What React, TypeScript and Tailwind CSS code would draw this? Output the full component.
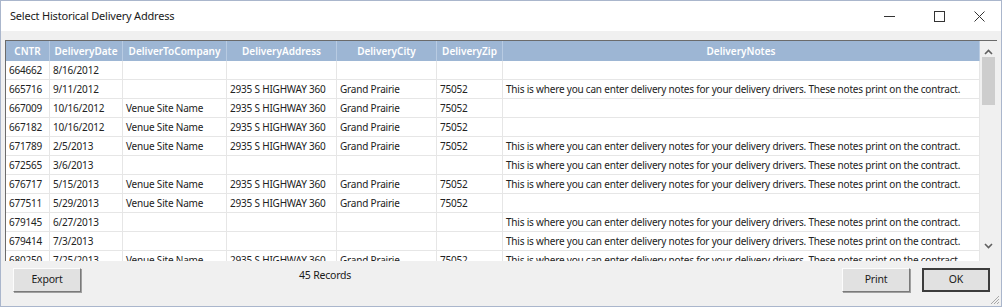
type Row = {
    cntr: string;
    date: string;
    company: string;
    address: string;
    city: string;
    zip: string;
    notes: string;
};

const NOTE = 'This is where you can enter delivery notes for your delivery drivers. These notes print on the contract.';

const rows: Row[] = [
    { cntr: '664662', date: '8/16/2012', company: '', address: '', city: '', zip: '', notes: '' },
    { cntr: '665716', date: '9/11/2012', company: '', address: '2935 S HIGHWAY 360', city: 'Grand Prairie', zip: '75052', notes: NOTE },
    { cntr: '667009', date: '10/16/2012', company: 'Venue Site Name', address: '2935 S HIGHWAY 360', city: 'Grand Prairie', zip: '75052', notes: '' },
    { cntr: '667182', date: '10/16/2012', company: 'Venue Site Name', address: '2935 S HIGHWAY 360', city: 'Grand Prairie', zip: '75052', notes: '' },
    { cntr: '671789', date: '2/5/2013', company: 'Venue Site Name', address: '2935 S HIGHWAY 360', city: 'Grand Prairie', zip: '75052', notes: NOTE },
    { cntr: '672565', date: '3/6/2013', company: '', address: '', city: '', zip: '', notes: NOTE },
    { cntr: '676717', date: '5/15/2013', company: 'Venue Site Name', address: '2935 S HIGHWAY 360', city: 'Grand Prairie', zip: '75052', notes: NOTE },
    { cntr: '677511', date: '5/29/2013', company: 'Venue Site Name', address: '2935 S HIGHWAY 360', city: 'Grand Prairie', zip: '75052', notes: '' },
    { cntr: '679145', date: '6/27/2013', company: '', address: '', city: '', zip: '', notes: NOTE },
    { cntr: '679414', date: '7/3/2013', company: '', address: '', city: '', zip: '', notes: NOTE },
    { cntr: '680250', date: '7/25/2013', company: 'Venue Site Name', address: '2935 S HIGHWAY 360', city: 'Grand Prairie', zip: '75052', notes: NOTE },
];

const headers = ['CNTR', 'DeliveryDate', 'DeliverToCompany', 'DeliveryAddress', 'DeliveryCity', 'DeliveryZip', 'DeliveryNotes'];
const cols = 'grid grid-cols-[44px_73px_104px_110px_100px_66px_477px]';

function WinButton({ label, isDefault }: { label: string; isDefault?: boolean }) {
    return (
        <button
            className={
                'w-[68px] h-[24px] bg-[#e1e1e1] text-[10.5px] tracking-[-0.2px] text-[#1a1a1a] ' +
                (isDefault
                    ? 'border-2 border-[#3c3c3c]'
                    : 'border border-t-[#fcfcfc] border-l-[#fcfcfc] border-r-[#7a7a7a] border-b-[#7a7a7a] shadow-[1px_1px_0_#a0a0a0]')
            }
        >
            {label}
        </button>
    );
}

export default function App() {
    return (
        <div
            className="w-[1002px] h-[307px] bg-[#f0f0f0] border border-[#aab6cc] flex flex-col overflow-hidden relative"
            style={{ fontFamily: '"Noto Sans", "Open Sans", "Liberation Sans", sans-serif' }}
        >
            {/* title bar */}
            <div className="h-[30px] bg-white flex items-center shrink-0">
                <span className="pl-[9px] text-[11px] tracking-[-0.2px] text-[#1a1a1a] flex-1">Select Historical Delivery Address</span>
                <div className="flex items-center h-full mr-[7px]">
                    <div className="w-[50px] flex justify-center">
                        <svg width="11" height="11" viewBox="0 0 11 11">
                            <path d="M0 5.5 H11" stroke="#333" strokeWidth="1" />
                        </svg>
                    </div>
                    <div className="w-[50px] flex justify-center">
                        <svg width="11" height="11" viewBox="0 0 11 11">
                            <rect x="0.5" y="0.5" width="10" height="10" fill="none" stroke="#333" strokeWidth="1" />
                        </svg>
                    </div>
                    <div className="w-[30px] flex justify-center">
                        <svg width="11" height="11" viewBox="0 0 11 11">
                            <path d="M0.5 0.5 L10.5 10.5 M10.5 0.5 L0.5 10.5" stroke="#333" strokeWidth="1" />
                        </svg>
                    </div>
                </div>
            </div>

            {/* grid */}
            <div className="mt-[9px] ml-[4px] w-[992px] h-[221px] border-t border-l border-[#6b6b6b] flex bg-white overflow-hidden shrink-0">
                <div className="flex flex-col w-[974px] overflow-hidden">
                    <div className={cols + ' h-[20px] shrink-0 bg-[#9db6d4] text-white text-[10px] font-semibold'}>
                        {headers.map((h) => (
                            <div key={h} className="flex items-center justify-center border-r border-[#b8cbe2] whitespace-nowrap">
                                {h}
                            </div>
                        ))}
                    </div>
                    {rows.map((r) => (
                        <div key={r.cntr} className={cols + ' h-[19px] shrink-0 text-[10px] tracking-[-0.2px] text-[#222] border-b border-[#e6e6e6]'}>
                            {[r.cntr, r.date, r.company, r.address, r.city, r.zip, r.notes].map((v, i) => (
                                <div key={i} className="flex items-center px-[3px] border-r border-[#e6e6e6] whitespace-nowrap overflow-hidden">
                                    {v}
                                </div>
                            ))}
                        </div>
                    ))}
                </div>
                <div className="w-[17px] bg-[#f0f0f0] flex flex-col items-center">
                    <div className="h-[14px] flex items-end">
                        <svg width="9" height="6" viewBox="0 0 9 6">
                            <path d="M1 5 L4.5 1.5 L8 5" fill="none" stroke="#606060" strokeWidth="1.6" />
                        </svg>
                    </div>
                    <div className="w-[13px] h-[48px] bg-[#cdcdcd] mt-[2px]" />
                    <div className="flex-1" />
                    <div className="h-[18px] flex items-start">
                        <svg width="9" height="6" viewBox="0 0 9 6">
                            <path d="M1 1 L4.5 4.5 L8 1" fill="none" stroke="#606060" strokeWidth="1.6" />
                        </svg>
                    </div>
                </div>
            </div>

            {/* footer */}
            <div className="flex items-start pt-[7px] pl-[12px] pr-[11px]">
                <WinButton label="Export" />
                <span className="ml-[218px] text-[10.5px] tracking-[-0.2px] text-[#1a1a1a]">45 Records</span>
                <div className="flex-1" />
                <WinButton label="Print" />
                <div className="w-[12px]" />
                <WinButton label="OK" isDefault />
            </div>

            {/* resize grip */}
            <svg className="absolute right-[1px] bottom-[1px]" width="11" height="11" viewBox="0 0 11 11">
                <path d="M10 2 L2 10 M10 5 L5 10 M10 8 L8 10" stroke="#a8a8a8" strokeWidth="1" />
            </svg>
        </div>
    );
}
